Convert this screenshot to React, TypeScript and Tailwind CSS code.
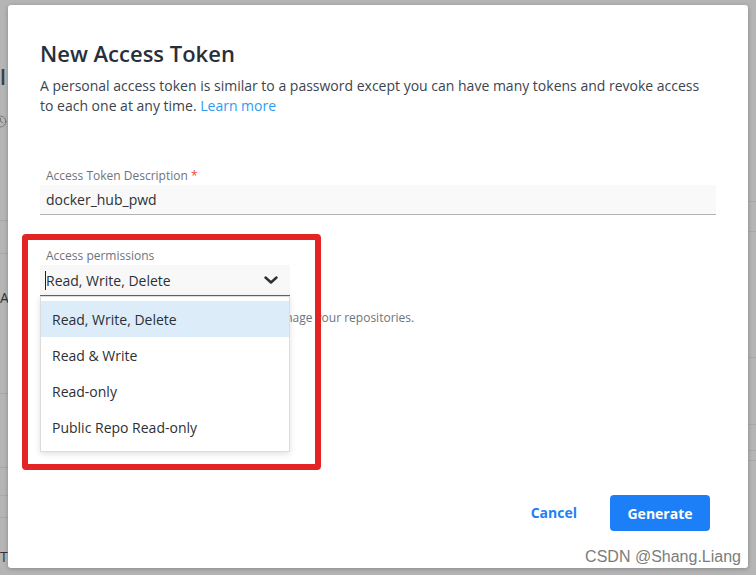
import { Clock } from "lucide-react";

const font = { fontFamily: '"Open Sans", "Noto Sans", sans-serif' };

const options = ["Read, Write, Delete", "Read & Write", "Read-only", "Public Repo Read-only"];

function Line({ top }: { top: number }) {
  return <div className="h-px bg-[#a9a9a9]" style={{ marginTop: top }} />;
}

function Backdrop() {
  return (
    <div className="absolute inset-0 flex justify-between" style={font}>
      {/* left sliver of the page behind */}
      <div className="flex w-[8px] flex-col overflow-hidden">
        <div className="mt-[66px] h-[22px] text-[21px] font-semibold leading-[22px] text-[#3b4148]">l</div>
        <div className="mt-[27px] -ml-[6px] h-[14px]">
          <Clock size={13} strokeWidth={1.6} className="text-[#6b6f73]" />
        </div>
        <Line top={91} />
        <Line top={32} />
        <div className="mt-[37px] h-[14px] text-[14px] leading-[14px] text-[#2f3337]">A</div>
        <Line top={88} />
        <Line top={73} />
        <Line top={27} />
        <Line top={21} />
        <div className="mt-[32px] h-[14px] text-[14px] leading-[14px] text-[#2f3337]">T</div>
      </div>
      {/* right sliver */}
      <div className="flex w-[8px] flex-col">
        <Line top={201} />
        <Line top={29} />
        <Line top={125} />
        <Line top={66} />
        <Line top={25} />
        <Line top={9} />
      </div>
    </div>
  );
}

function PermissionSelect() {
  return (
    <div className="relative w-[250px]">
      <div className="flex h-[31px] items-center justify-between border-b border-[#1f6fd9] bg-[#f8f8f8] pl-[6px] pr-3">
        <span className="relative text-[14px] text-[#2b3036]">
          <span className="absolute -left-px top-[1px] h-[19px] w-px bg-[#222]" />
          Read, Write, Delete
        </span>
        <svg width="14" height="8" viewBox="0 0 14 8" fill="none">
          <polyline
            points="1.5,1.5 7,6.5 12.5,1.5"
            stroke="#2b2f33"
            strokeWidth="2.4"
            strokeLinecap="round"
            strokeLinejoin="round"
          />
        </svg>
      </div>
      <ul className="absolute left-0 top-full z-10 w-full border border-[#dcdcdc] bg-white pb-[6px] pt-[4px] shadow-[0_2px_6px_rgba(0,0,0,0.12)]">
        {options.map((o, i) => (
          <li
            key={o}
            className={`flex h-[36px] items-center px-[11px] text-[14px] text-[#2b3036] ${
              i === 0 ? "bg-[#ddecf9]" : ""
            }`}
          >
            {o}
          </li>
        ))}
      </ul>
    </div>
  );
}

export default function App() {
  return (
    <div className="relative h-[575px] w-[756px] overflow-hidden bg-[#b5b5b5]">
      <Backdrop />

      {/* Modal */}
      <div className="absolute inset-0 pl-[8px] pt-[5px]">
        <div
          className="relative flex h-[563px] w-[740px] flex-col rounded-[3px] bg-white px-8 pt-[33px] shadow-[0_1px_4px_rgba(0,0,0,0.25)]"
          style={font}
        >
          <h2 className="text-[22px] font-semibold leading-[30px] text-[#27303a]">New Access Token</h2>
          <p className="mt-2 max-w-[668px] text-[14px] leading-[20px] text-[#3b4550]">
            A personal access token is similar to a password except you can have many tokens and revoke access to
            each one at any time. <a className="text-[#2f9bef]">Learn more</a>
          </p>

          {/* Description */}
          <label className="mt-[52px] pl-[6px] text-[12px] leading-[16px] text-[#6b747d]">
            Access Token Description <span className="text-[#e8453c]">*</span>
          </label>
          <div className="mt-[1px] flex h-[30px] items-center border-b border-[#b3b3b3] bg-[#f9f9f9] pl-[6px] text-[14px] text-[#2b3036]">
            docker_hub_pwd
          </div>

          {/* Permissions */}
          <label className="mt-[33px] pl-[6px] text-[12px] leading-[16px] text-[#6b747d]">Access permissions</label>
          <div className="mt-px">
            <PermissionSelect />
          </div>
          <p className="mt-[14px] pl-[6px] text-[12px] leading-[16px] text-[#6b747d]">
            Read, Write, Delete tokens allow you to manage your repositories.
          </p>

          {/* Footer */}
          <div className="mt-auto flex items-center justify-end gap-[17px] pb-[37px] pr-[6px]">
            <button className="px-4 text-[14px] font-bold leading-[36px] text-[#1d7ff7]">Cancel</button>
            <button className="h-[36px] w-[100px] rounded-[4px] bg-[#1d7ff7] text-[14px] font-bold text-white">
              Generate
            </button>
          </div>

          {/* annotation box */}
          <div className="pointer-events-none absolute left-[14px] top-[229px] h-[236px] w-[299px] rounded-[4px] border-[6px] border-[#e42323]" />
        </div>
      </div>

      {/* watermark */}
      <div
        className="absolute bottom-[9px] right-[15px] text-[16px] leading-[18px] text-[#7c7c7c]"
        style={{ fontFamily: '"Liberation Sans", Arial, sans-serif' }}
      >
        CSDN @Shang.Liang
      </div>
    </div>
  );
}
